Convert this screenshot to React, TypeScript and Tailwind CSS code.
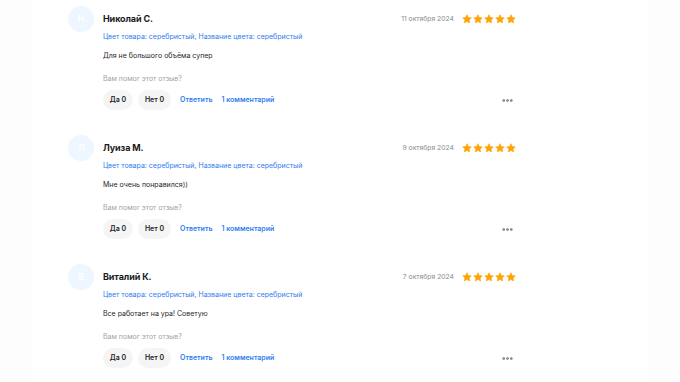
import { MoreHorizontal } from 'lucide-react'

type Review = {
  name: string
  initial: string
  date: string
  text: string
}

const reviews: Review[] = [
  { name: 'Николай С.', initial: 'Н', date: '11 октября 2024', text: 'Для не большого объёма супер' },
  { name: 'Луиза М.', initial: 'Л', date: '9 октября 2024', text: 'Мне очень понравился))' },
  { name: 'Виталий К.', initial: 'В', date: '7 октября 2024', text: 'Все работает на ура! Советую' },
]

function Star() {
  return (
    <svg width="10" height="10" viewBox="0 0 24 24" className="shrink-0">
      <path
        d="M12 1.8l3.1 6.6 7.2.9-5.3 5 1.4 7.1L12 17.9l-6.4 3.5 1.4-7.1-5.3-5 7.2-.9z"
        fill="#ffa406"
        stroke="#ffa406"
        strokeWidth={1.5}
        strokeLinejoin="round"
      />
    </svg>
  )
}

function ReviewItem({ review }: { review: Review }) {
  return (
    <div className="flex gap-[9px] h-[129px]">
      {/* Avatar */}
      <div className="w-[26px] h-[26px] rounded-full bg-[#eef6ff] flex items-center justify-center shrink-0">
        <span className="text-[9px] font-semibold text-white">{review.initial}</span>
      </div>

      <div className="flex-1 min-w-0">
        {/* Name + date + rating */}
        <div className="h-[24px] mt-[1px] flex items-center justify-between">
          <span className="text-[9px] font-bold text-[#1a1a1a] tracking-[-0.1px]">{review.name}</span>
          <div className="flex items-center gap-[8px]">
            <span className="text-[6.8px] text-[#8a8a8a]">{review.date}</span>
            <div className="flex items-center gap-[1px]">
              <Star />
              <Star />
              <Star />
              <Star />
              <Star />
            </div>
          </div>
        </div>

        <div className="h-[12px] leading-[12px] text-[7px] text-[#2f7cf0]">
          Цвет товара: серебристый, Название цвета: серебристый
        </div>

        <div className="mt-[7px] h-[12px] leading-[12px] text-[7px] text-[#1f1f1f]">{review.text}</div>

        <div className="mt-[11px] h-[12px] leading-[12px] text-[7px] text-[#a3a3a3]">Вам помог этот отзыв?</div>

        {/* Actions */}
        <div className="mt-[5px] h-[20px] flex items-center">
          <button className="w-[30px] h-[20px] rounded-full bg-[#f5f5f5] text-[7px] font-semibold text-[#222]">
            Да 0
          </button>
          <button className="ml-[5px] w-[33px] h-[20px] rounded-full bg-[#f5f5f5] text-[7px] font-semibold text-[#222]">
            Нет 0
          </button>
          <span className="ml-[9px] text-[7px] font-semibold text-[#2f7cf0]">Ответить</span>
          <span className="ml-[9px] text-[7px] font-semibold text-[#2f7cf0]">1 комментарий</span>
          <div className="flex-1" />
          <MoreHorizontal className="w-[13px] h-[13px] text-[#777] mr-[2px]" strokeWidth={3} />
        </div>
      </div>
    </div>
  )
}

export default function App() {
  return (
    <div className="w-[680px] h-[382px] bg-[#fdfdfd] overflow-hidden font-['Inter',sans-serif]">
      <div className="mx-auto w-[616px] h-full bg-white pl-[36px] pt-[6px]">
        <div className="w-[448px]">
          {reviews.map((r) => (
            <ReviewItem key={r.name} review={r} />
          ))}
        </div>
      </div>
    </div>
  )
}
